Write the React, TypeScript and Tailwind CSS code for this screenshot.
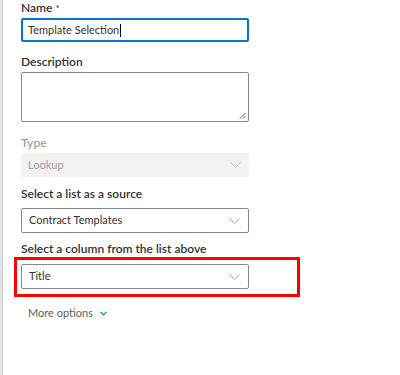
import { ChevronDown } from "lucide-react";

const fontStack = { fontFamily: 'Lato, "Open Sans", sans-serif' };

function Chevron({ light }: { light?: boolean }) {
  return (
    <svg width="11" height="6" viewBox="0 0 11 6" className="shrink-0">
      <path
        d="M0.5 0.5 L5.5 5.2 L10.5 0.5"
        fill="none"
        stroke={light ? "#c8c6c4" : "#a19f9d"}
        strokeWidth="1"
      />
    </svg>
  );
}

function Label({ text, required, muted }: { text: string; required?: boolean; muted?: boolean }) {
  return (
    <div
      className={`h-[16px] leading-[16px] text-[12px] font-semibold ${
        muted ? "text-[#a19f9d]" : "text-[#323130]"
      }`}
    >
      {text}
      {required && <span className="text-[#a4262c] ml-[3px] text-[10px] align-top">*</span>}
    </div>
  );
}

function Dropdown({ value, disabled }: { value: string; disabled?: boolean }) {
  return (
    <div
      className={`w-[228px] rounded-[2px] flex items-center justify-between pl-[7px] pr-[8px] text-[11px] ${
        disabled
          ? "bg-[#f3f2f1] text-[#a19f9d] h-[24px]"
          : "h-[25px] bg-white border border-[#8a8886] text-[#323130]"
      }`}
    >
      <span>{value}</span>
      <Chevron light={disabled} />
    </div>
  );
}

export default function App() {
  return (
    <div className="w-[400px] h-[375px] bg-white flex overflow-hidden" style={fontStack}>
      {/* left panel edge */}
      <div className="w-[3px] h-full bg-[#e3e3e3] border-r border-[#d0d0d0]" />

      <div className="flex flex-col pl-[18px] pt-0">
        <Label text="Name" required />
        <div className="mt-[2px] h-[24px] w-[228px] rounded-[2px] border-2 border-[#0078d4] flex items-center pl-[5px] text-[11px] text-[#323130]">
          <span>Template Selection</span>
          <span className="w-px h-[13px] bg-black ml-px" />
        </div>

        <div className="mt-[12px]">
          <Label text="Description" />
        </div>
        <div className="relative mt-[2px] h-[50px] w-[228px] rounded-[2px] border border-[#8a8886]">
          <svg width="7" height="7" viewBox="0 0 7 7" className="absolute right-[2px] bottom-[2px]">
            <path d="M6.5 1 L1 6.5 M6.5 4 L4 6.5" stroke="#605e5c" strokeWidth="1" />
          </svg>
        </div>

        <div className="mt-[13px]">
          <Label text="Type" muted />
        </div>
        <div className="mt-[2px]">
          <Dropdown value="Lookup" disabled />
        </div>

        <div className="mt-[9px]">
          <Label text="Select a list as a source" />
        </div>
        <div className="mt-[6px]">
          <Dropdown value="Contract Templates" />
        </div>

        <div className="mt-[8px]">
          <Label text="Select a column from the list above" />
        </div>
        <div className="relative mt-[7px]">
          <Dropdown value="Title" />
          {/* annotation */}
          <div className="absolute left-[-7px] top-[-7px] w-[286px] h-[40px] border-[3px] border-[#ff0000]" />
        </div>

        <button className="mt-[16px] ml-[7px] h-[16px] flex items-center gap-[5px] text-[11px] text-[#605e5c]">
          More options
          <ChevronDown size={11} strokeWidth={2.5} className="text-[#0078d4]" />
        </button>
      </div>
    </div>
  );
}
